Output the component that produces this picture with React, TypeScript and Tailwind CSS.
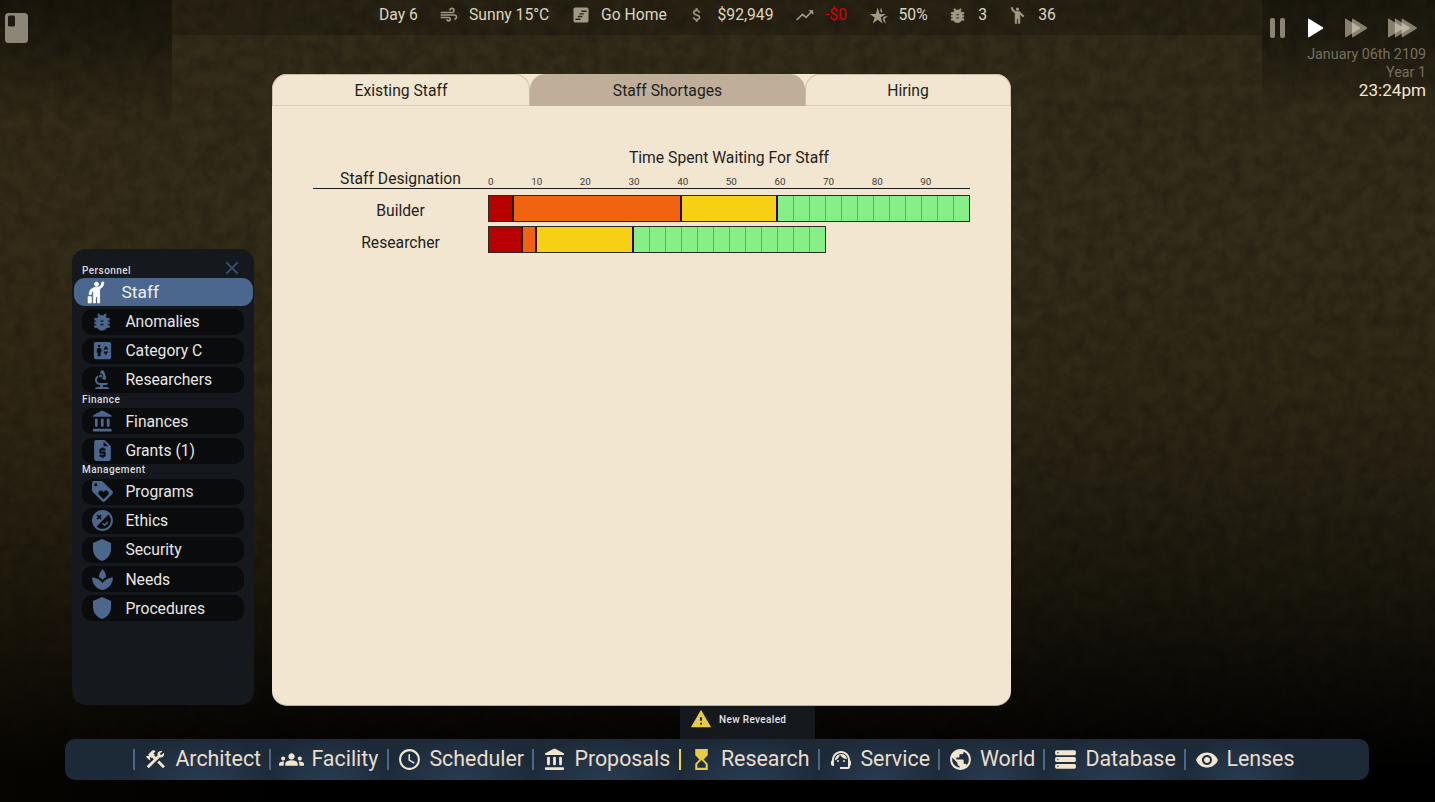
import type { IconType } from 'react-icons';
import {
  MdAir,
  MdAttachMoney,
  MdBiotech,
  MdBugReport,
  MdClose,
  MdConstruction,
  MdElevator,
  MdEmojiPeople,
  MdFlaky,
  MdGroups,
  MdHail,
  MdHotelClass,
  MdHourglassTop,
  MdLoyalty,
  MdPublic,
  MdRemoveRedEye,
  MdRequestQuote,
  MdSchedule,
  MdShield,
  MdSpa,
  MdSupportAgent,
  MdWarning,
} from 'react-icons/md';

const Bank: IconType = ({ size, className }) => (
  <svg viewBox="0 0 24 24" width={size} height={size} className={className} fill="currentColor">
    <path d="M11.2 .9 Q12 .5 12.8 .9 L21.6 5.6 Q22 6 22 6.6 Q22 7.3 21.2 7.3 H2.8 Q2 7.3 2 6.6 Q2 6 2.4 5.6Z" />
    <rect x="4.2" y="9" width="3" height="9" rx="1.4" />
    <rect x="10.5" y="9" width="3" height="9" rx="1.4" />
    <rect x="16.8" y="9" width="3" height="9" rx="1.4" />
    <rect x="2" y="20" width="20" height="3" rx="1" />
  </svg>
);

const Rows: IconType = ({ size, className }) => (
  <svg viewBox="0 0 24 24" width={size} height={size} className={className} fill="currentColor">
    {[3.2, 9.7, 16.2].map((y) => (
      <g key={y}>
        <rect x="2" y={y} width="20" height="4.6" rx="1.5" />
        <rect x="3.9" y={y + 1.6} width="1.5" height="1.4" className="fill-[#1c2a38]/70" />
      </g>
    ))}
  </svg>
);

const Stairs: IconType = ({ size, className }) => (
  <svg viewBox="0 0 24 24" width={size} height={size} className={className} fill="currentColor">
    <rect x="3" y="3" width="18" height="18" rx="2.2" />
    <path d="M13 7.4H18M10.8 10.6H14.8M9 13.8H13M6 17H10.8" className="stroke-[#2a2517]" strokeWidth="1.7" strokeLinecap="round" />
  </svg>
);

const Trend: IconType = ({ size, className }) => (
  <svg viewBox="0 0 24 24" width={size} height={size} className={className} fill="none">
    <path d="M2.6 17.4L9 11.2L13.2 14.8L19.6 8.4" stroke="currentColor" strokeWidth="2" strokeLinejoin="round" strokeLinecap="round" />
    <path d="M16 6.2H22V12Z" fill="currentColor" />
  </svg>
);

const HEAVY = '[&>path:not([fill=none])]:[stroke-width:0.8]';

function Ground() {
  return (
    <div className="absolute inset-0 bg-[linear-gradient(180deg,#332c19_0%,#342d1a_30%,#2f2815_48%,#272113_60%,#1c180d_72%,#0e0c07_84%,#000_96%)]">
      <svg className="h-full w-full" aria-hidden="true">
        <filter id="soil" x="0" y="0" width="100%" height="100%">
          <feTurbulence type="fractalNoise" baseFrequency="0.07" numOctaves={4} seed={4} />
          <feColorMatrix type="matrix" values="0 0 0 0 0  0 0 0 0 0  0 0 0 0 0  0.42 0 0 0 -0.12" />
        </filter>
        <rect width="100%" height="100%" filter="url(#soil)" />
      </svg>
      <div className="absolute inset-0 bg-[linear-gradient(90deg,rgba(56,38,10,0.12)_0%,transparent_20%)]" />
    </div>
  );
}

const stats: { icon: IconType; text: string; width: string; size: number; heavy?: boolean; color?: string }[] = [
  { icon: MdAir, text: 'Sunny 15°C', width: 'w-[132px]', size: 20 },
  { icon: Stairs, text: 'Go Home', width: 'w-[116.5px]', size: 20 },
  { icon: MdAttachMoney, text: '$92,949', width: 'w-[107.5px]', size: 18 },
  { icon: Trend, text: '-$0', width: 'w-[73.5px]', size: 20, color: 'text-[#d90000]' },
  { icon: MdHotelClass, text: '50%', width: 'w-[79.7px]', size: 19 },
  { icon: MdBugReport, text: '3', width: 'w-[60px]', size: 19, heavy: true },
  { icon: MdEmojiPeople, text: '36', width: 'w-[54px]', size: 19, heavy: true },
];

function TopBar() {
  return (
    <div className="flex h-[35px] w-[1090px] items-start bg-black/20 pl-[207px] text-[15.7px] leading-[30px] text-[#dfd4bf]">
      <div className="w-[59.5px]">Day 6</div>
      {stats.map(({ icon: Icon, text, width, size, heavy, color }) => (
        <div key={text} className={`flex shrink-0 items-center gap-[10.5px] ${width}`}>
          <span className="flex w-5 justify-center">
            <Icon size={size} className={`text-[#a29984] ${heavy ? HEAVY : ''}`} />
          </span>
          <span className={color}>{text}</span>
        </div>
      ))}
    </div>
  );
}

function Arrows({ count }: { count: number }) {
  const step = count === 2 ? 7 : 6.8;
  return (
    <svg width={15.5 + step * (count - 1)} height="20" className="shrink-0">
      {Array.from({ length: count }, (_, i) => (
        <path
          key={i}
          transform={`translate(${i * step} 0)`}
          d="M0 1.4Q0 .2 1 .8L14.8 9.3Q15.6 10 14.8 10.7L1 19.2Q0 19.8 0 18.6Z"
          className={count === 1 ? 'fill-white' : 'fill-[#f2e6d0]/50'}
        />
      ))}
    </svg>
  );
}

function ClockPanel() {
  return (
    <div className="flex h-[112px] flex-1 flex-col items-end bg-[linear-gradient(180deg,rgba(0,0,0,0.45),rgba(0,0,0,0.3)_50%,transparent)] pr-[9px] pt-[18px]">
      <div className="flex h-5 w-full items-center pl-[8px]">
        <div className="flex h-[20px] w-[38px] gap-[5px]">
          <span className="w-[5px] rounded-[2px] bg-[#8b8373]" />
          <span className="w-[5px] rounded-[2px] bg-[#8b8373]" />
        </div>
        <div className="w-[37px]">
          <Arrows count={1} />
        </div>
        <div className="w-[43.3px]">
          <Arrows count={2} />
        </div>
        <Arrows count={3} />
      </div>
      <div className="mt-[7px] text-[14.3px] leading-[18px] text-[#776e5e]">January 06th 2109</div>
      <div className="text-[14.3px] leading-[18px] text-[#776e5e]">Year 1</div>
      <div className="text-[17.1px] leading-[19px] text-[#f2e6d0]">23:24pm</div>
    </div>
  );
}

type Entry = { icon: IconType; text: string; size: number; heavy?: boolean };

const groups: { title: string; entries: Entry[] }[] = [
  {
    title: 'Personnel',
    entries: [
      { icon: MdHail, text: 'Staff', size: 25, heavy: true },
      { icon: MdBugReport, text: 'Anomalies', size: 22, heavy: true },
      { icon: MdElevator, text: 'Category C', size: 23 },
      { icon: MdBiotech, text: 'Researchers', size: 24 },
    ],
  },
  {
    title: 'Finance',
    entries: [
      { icon: Bank, text: 'Finances', size: 22.5 },
      { icon: MdRequestQuote, text: 'Grants (1)', size: 25 },
    ],
  },
  {
    title: 'Management',
    entries: [
      { icon: MdLoyalty, text: 'Programs', size: 25 },
      { icon: MdFlaky, text: 'Ethics', size: 25 },
      { icon: MdShield, text: 'Security', size: 24 },
      { icon: MdSpa, text: 'Needs', size: 25 },
      { icon: MdShield, text: 'Procedures', size: 24 },
    ],
  },
];

function Sidebar() {
  return (
    <div className="ml-[72px] mt-[175px] h-[456px] w-[182px] rounded-[14px] bg-[#15181d] pt-[13.5px]">
      {groups.map(({ title, entries }, g) => (
        <div key={title}>
          <div
            className={`flex items-center justify-between pl-[10px] pr-[11.5px] text-[10px] font-medium tracking-[0.45px] text-[#dcdcdc] ${g === 0 ? 'h-[15.5px]' : 'h-[12px] pb-[3px]'}`}
          >
            {title}
            {g === 0 && <MdClose size={22} className="-mt-[5px] text-[#384f70]" />}
          </div>
          {entries.map(({ icon: Icon, text, size, heavy }) =>
            text === 'Staff' ? (
              <div
                key={text}
                className="mx-[1.5px] mb-[1.2px] flex h-[28px] items-center rounded-[11px] bg-[#4b678d] text-[17.4px] text-[#f0f0f0]"
              >
                <span className="flex w-[48px] shrink-0 justify-center pr-[3px]">
                  <Icon size={size} className={`text-white ${heavy ? HEAVY : ''}`} />
                </span>
                {text}
              </div>
            ) : (
              <div key={text} className="flex h-[29.2px] items-center px-[10px]">
                <div className="flex h-[26px] w-full items-center rounded-[10px] bg-[#0a0b0d] text-[15.7px] text-[#e6e6e6]">
                  <span className="flex w-[43.4px] shrink-0 justify-center pr-[3px]">
                    <Icon size={size} className={`text-[#4b678d] ${heavy ? HEAVY : ''}`} />
                  </span>
                  {text}
                </div>
              </div>
            ),
          )}
        </div>
      ))}
    </div>
  );
}

const tabs = [
  { text: 'Existing Staff', width: 'w-[258px]', active: false },
  { text: 'Staff Shortages', width: 'w-[275px]', active: true },
  { text: 'Hiring', width: 'w-[206px]', active: false },
];

const ticks = ['10', '20', '30', '40', '50', '60', '70', '80', '90'];

const rows = [
  { name: 'Builder', parts: [{ w: 24.5, c: 'bg-[#b90000]' }, { w: 168, c: 'bg-[#f1640f]' }, { w: 96, c: 'bg-[#f7d014]' }] },
  { name: 'Researcher', parts: [{ w: 34, c: 'bg-[#b90000]' }, { w: 14, c: 'bg-[#f1640f]' }, { w: 96.5, c: 'bg-[#f7d014]' }] },
];

function Bar({ parts }: { parts: { w: number; c: string }[] }) {
  return (
    <div className="flex h-[27px] border border-[#2b2a22]">
      {parts.map(({ w, c }) => (
        <div key={c} className={`border-r-2 border-[#14120a] ${c}`} style={{ width: w }} />
      ))}
      <div className="flex bg-[#87ef88]">
        {Array.from({ length: 12 }, (_, i) => (
          <div key={i} className={i < 11 ? 'w-[16.05px] border-r border-[#86958d]' : 'w-[15px]'} />
        ))}
      </div>
    </div>
  );
}

function StaffWindow() {
  return (
    <div className="ml-[18px] h-[632px] w-[739px] rounded-[15px] border-b border-[#b9ad98] bg-[#f2e6d1] text-[15.7px] text-[#1f1d1a]">
      <div className="flex h-[32px]">
        {tabs.map(({ text, width, active }) => (
          <div
            key={text}
            className={`flex items-center justify-center rounded-t-[15px] border pt-[2px] ${width} ${active ? 'border-[#bfae9a] bg-[#bfae9a]' : 'border-[#cbbca8] border-b-[#d9cbb6]'}`}
          >
            {text}
          </div>
        ))}
      </div>
      <div className="pl-[41px] pt-[42px]">
        <div className="ml-[174px] w-[484px] pt-px text-center leading-[18px]">Time Spent Waiting For Staff</div>
        <div className="flex h-[22px] w-[657px] items-end border-b border-[#1f1d1a]">
          <div className="h-[19px] w-[175px] text-center leading-[20px]">Staff Designation</div>
          <div className="flex text-[9.8px] leading-[12px] text-[#3c3932]">
            <span className="w-[24.4px]">0</span>
            {ticks.map((t) => (
              <span key={t} className="w-[48.65px] text-center">
                {t}
              </span>
            ))}
          </div>
        </div>
        <div className="flex flex-col gap-[4px] pt-[6px]">
          {rows.map(({ name, parts }, i) => (
            <div key={name} className="flex h-[27px]">
              <div className={`w-[175px] text-center leading-[20px] ${i === 0 ? 'pt-[6px]' : 'pt-[7px]'}`}>{name}</div>
              <Bar parts={parts} />
            </div>
          ))}
        </div>
      </div>
    </div>
  );
}

const nav: { icon: IconType; text: string; width: string; size: number; alert?: boolean }[] = [
  { icon: MdConstruction, text: 'Architect', width: 'w-[136px]', size: 23 },
  { icon: MdGroups, text: 'Facility', width: 'w-[118px]', size: 25 },
  { icon: MdSchedule, text: 'Scheduler', width: 'w-[145px]', size: 25 },
  { icon: Bank, text: 'Proposals', width: 'w-[146.5px]', size: 23 },
  { icon: MdHourglassTop, text: 'Research', width: 'w-[139.5px]', size: 25, alert: true },
  { icon: MdSupportAgent, text: 'Service', width: 'w-[119.5px]', size: 24 },
  { icon: MdPublic, text: 'World', width: 'w-[105.5px]', size: 25 },
  { icon: Rows, text: 'Database', width: 'w-[141px]', size: 25 },
  { icon: MdRemoveRedEye, text: 'Lenses', width: 'w-[117px]', size: 24 },
];

function BottomNav() {
  return (
    <div className="ml-[65px] flex h-[41px] w-[1304px] items-stretch rounded-[10px] bg-[#1c2a38] pl-[68px] text-[21.4px] text-[#e9deca]">
      {nav.map(({ icon: Icon, text, width, size, alert }) => (
        <div
          key={text}
          className={`flex shrink-0 items-center rounded-b-[10px] bg-[radial-gradient(ellipse_at_50%_100%,#293b51_0%,#233345_40%,#1c2a38_75%)] ${width}`}
        >
          <span className={`h-[21px] w-[2px] shrink-0 ${alert ? 'bg-[#f3d23c]' : 'bg-[#4b678d]'}`} />
          <span className="flex w-[40.4px] shrink-0 justify-center pl-[1.4px]">
            <Icon size={size} className={alert ? 'text-[#e8cd42]' : 'text-[#f2e6d1]'} />
          </span>
          <span className="pb-[2px] leading-[38px]">{text}</span>
        </div>
      ))}
    </div>
  );
}

export default function App() {
  return (
    <div className="relative h-[802px] w-[1435px] overflow-hidden bg-black font-[Roboto,sans-serif]">
      <Ground />
      <div className="relative flex h-full flex-col">
        <div className="flex h-[74px] items-start">
          <div className="h-[125px] w-[172px] shrink-0 bg-[linear-gradient(180deg,rgba(0,0,0,0.5),rgba(0,0,0,0.35)_35%,transparent)] pl-[5px] pt-[13px]">
            <svg width="23" height="30">
              <rect width="23" height="30" rx="3.5" className="fill-[#8d8575]" />
              <rect x="3" y="2.5" width="7" height="11" rx="1.5" className="fill-[#1d190f]" />
            </svg>
          </div>
          <TopBar />
          <ClockPanel />
        </div>
        <div className="flex h-[632px] items-start">
          <Sidebar />
          <StaffWindow />
        </div>
        <div className="ml-[680px] flex h-[33px] w-[135px] gap-[7.5px] bg-[#15181d] pl-[9.5px] pt-[2px] text-[10px] font-medium tracking-[0.35px] text-[#e4e4e4]">
          <MdWarning size={22} className="text-[#e8cd42]" />
          <span className="leading-[24px]">New Revealed</span>
        </div>
        <BottomNav />
      </div>
    </div>
  );
}
